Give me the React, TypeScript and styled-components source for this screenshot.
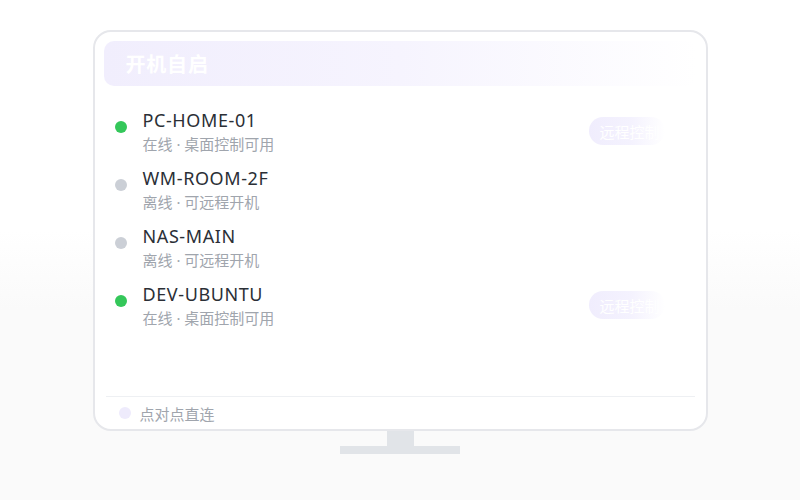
import styled, { createGlobalStyle } from "styled-components";

const GlobalStyle = createGlobalStyle`
  html, body {
    margin: 0;
    padding: 0;
  }
  body {
    width: 800px;
    height: 500px;
    overflow: hidden;
    font-family: "Noto Sans", "Noto Sans CJK SC", sans-serif;
    background: linear-gradient(180deg, #ffffff 0%, #ffffff 46%, #fafafa 62%, #fafafa 100%);
  }
`;

const Page = styled.div`
  display: flex;
  flex-direction: column;
  align-items: center;
  padding-top: 30px;
`;

const Monitor = styled.div`
  box-sizing: border-box;
  width: 615px;
  height: 401px;
  border: 2px solid #e6e7eb;
  border-radius: 18px;
  background: #ffffff;
  padding: 9px 9px 0;
  display: flex;
  flex-direction: column;
`;

const Header = styled.div`
  height: 45px;
  border-radius: 10px;
  background: linear-gradient(90deg, #f1eefd 0%, #f6f4fe 50%, #ffffff 100%);
  display: flex;
  align-items: center;
  justify-content: space-between;
  padding: 0 22px;
`;

const Title = styled.div`
  color: #ffffff;
  font-size: 20px;
  font-weight: 700;
  letter-spacing: 0.8px;
`;

const HeaderMark = styled.div`
  color: #ffffff;
  font-size: 16px;
  opacity: 0.9;
`;

const List = styled.div`
  flex: 1;
  display: flex;
  flex-direction: column;
  gap: 12px;
  padding: 23px 0 0 11px;
`;

const Row = styled.div`
  display: flex;
  align-items: flex-start;
  padding-right: 32px;
`;

const Dot = styled.span<{ $online: boolean }>`
  width: 12px;
  height: 12px;
  border-radius: 50%;
  background: ${(p) => (p.$online ? "#34c75a" : "#cbcfd6")};
  margin: 12px 16px 0 0;
  flex-shrink: 0;
`;

const Info = styled.div`
  flex: 1;
  display: flex;
  flex-direction: column;
`;

const Name = styled.div`
  font-size: 18px;
  line-height: 22px;
  color: #2b2f36;
  letter-spacing: 0.6px;
`;

const Sub = styled.div`
  font-size: 15px;
  line-height: 22px;
  margin-top: 2px;
  color: #a0a5ad;
`;

const ControlButton = styled.button`
  font-family: "Noto Sans CJK SC", sans-serif;
  width: 76px;
  height: 28px;
  margin-top: 8px;
  border: none;
  border-radius: 14px;
  background: linear-gradient(90deg, #f0edfd 0%, #f4f2fe 55%, #ffffff 100%);
  color: #ffffff;
  font-size: 15px;
  text-align: left;
  padding: 0 0 0 11px;
`;

const Divider = styled.div`
  height: 1px;
  background: #eef0f3;
  margin: 0 2px;
`;

const Footer = styled.div`
  display: flex;
  align-items: center;
  height: 32px;
  padding-left: 15px;
  gap: 9px;
`;

const FooterDot = styled.span`
  width: 12px;
  height: 12px;
  border-radius: 50%;
  background: #eeebfc;
`;

const FooterText = styled.span`
  font-size: 15px;
  color: #a0a5ad;
`;

const Neck = styled.div`
  width: 27px;
  height: 15px;
  background: #e1e4e8;
`;

const Base = styled.div`
  width: 120px;
  height: 8px;
  background: #e1e4e8;
`;

interface Device {
  name: string;
  online: boolean;
}

const devices: Device[] = [
  { name: "PC-HOME-01", online: true },
  { name: "WM-ROOM-2F", online: false },
  { name: "NAS-MAIN", online: false },
  { name: "DEV-UBUNTU", online: true },
];

const App = () => {
  return (
    <Page>
      <GlobalStyle />
      <Monitor>
        <Header>
          <Title>开机自启</Title>
          <HeaderMark>· · ·</HeaderMark>
        </Header>
        <List>
          {devices.map((d) => (
            <Row key={d.name}>
              <Dot $online={d.online} />
              <Info>
                <Name>{d.name}</Name>
                <Sub>{d.online ? "在线 · 桌面控制可用" : "离线 · 可远程开机"}</Sub>
              </Info>
              {d.online && <ControlButton>远程控制</ControlButton>}
            </Row>
          ))}
        </List>
        <Divider />
        <Footer>
          <FooterDot />
          <FooterText>点对点直连</FooterText>
        </Footer>
      </Monitor>
      <Neck />
      <Base />
    </Page>
  );
};

export default App;
